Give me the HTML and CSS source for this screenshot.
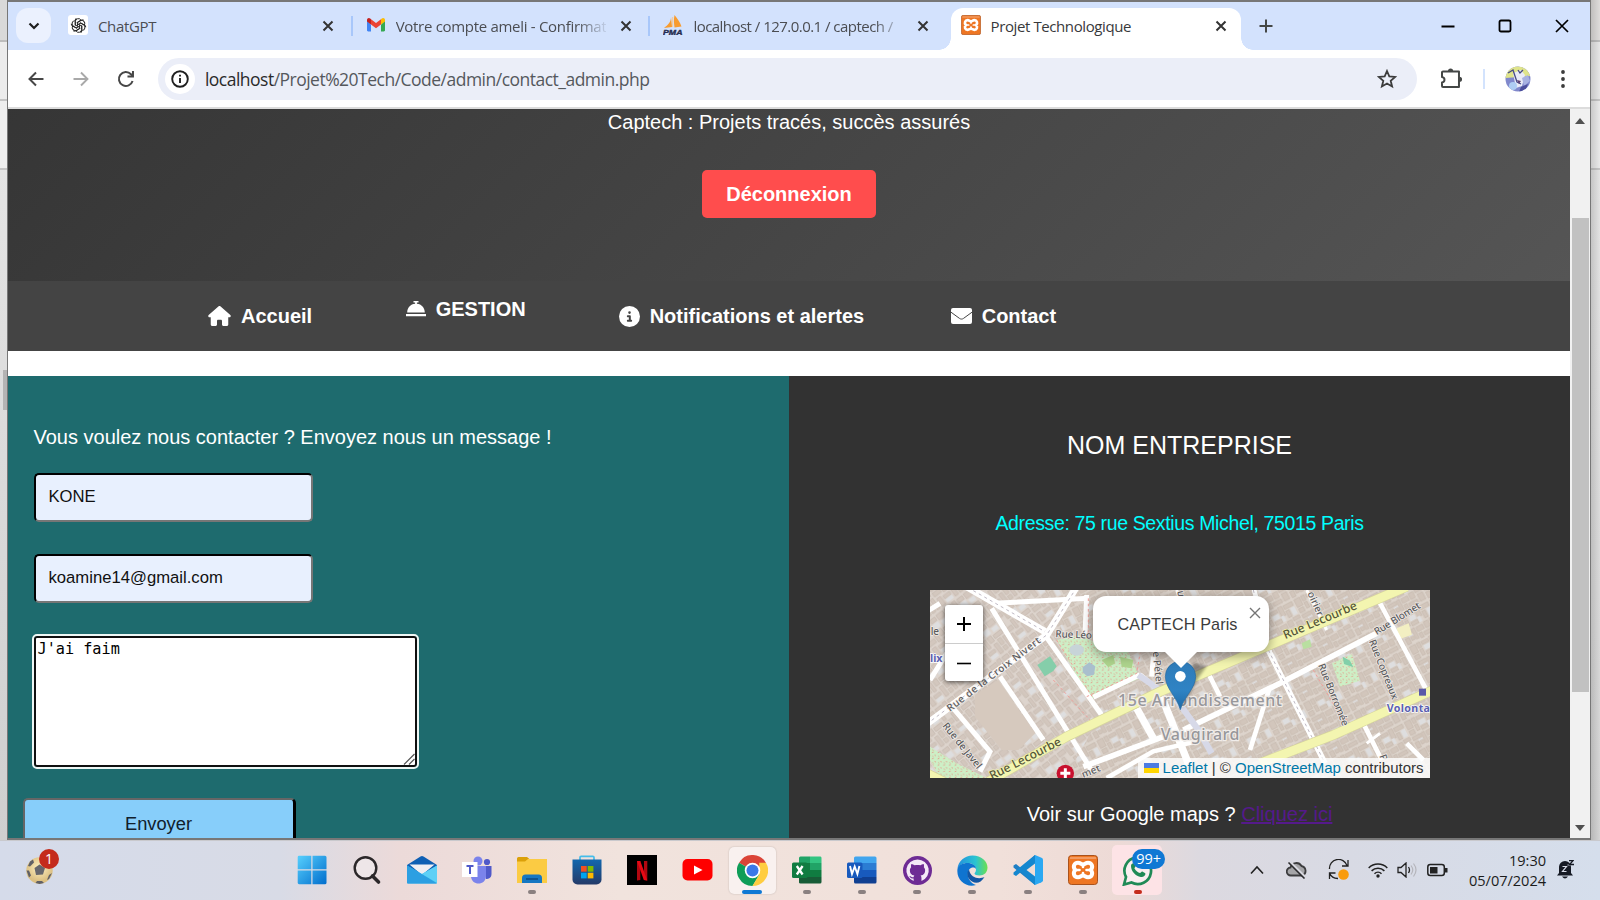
FILE: index.html
```html
<!DOCTYPE html>
<html lang="fr">
<head>
<meta charset="utf-8">
<title>Projet Technologique</title>
<link rel="stylesheet" href="styles.css">
</head>
<body>
<svg class="defs" width="0" height="0">
  <defs>
    <symbol id="x" viewBox="0 0 14 14"><path d="M2.500 2.500l9 9M11.500 2.500l-9 9" fill="none" stroke="currentColor" stroke-width="2"/></symbol>
    <symbol id="xampp" viewBox="0 0 30 30">
      <rect x=".5" y=".5" width="29" height="29" rx="3" fill="#ee7623" stroke="#a9521d"/>
      <path d="M2 3h26" stroke="#f5a878" stroke-width="1.500"/>
      <path d="M7.300 15C4.500 12 6 7.800 10 7.800c2.600 0 3.200 1.600 5 1.600s2.400-1.600 5-1.600c4 0 5.500 4.200 2.700 7.200 2.800 3 1.300 7.200-2.700 7.200-2.600 0-3.200-1.600-5-1.600s-2.400 1.600-5 1.600c-4 0-5.500-4.200-2.700-7.200z" fill="#ee7623" stroke="#fff" stroke-width="4"/>
      <path d="M8 15h3.500M18.500 15H22M15 9.500v2.500M15 18v2.500" stroke="#fff" stroke-width="2.600" stroke-linecap="round"/>
    </symbol>
  </defs>
</svg>
<div class="desktop">
  <div class="stage">
    <div class="edge edge-left"><i class="edge-thumb"></i></div>
    <div class="window">
      <div class="tabstrip">
        <button class="tab-search" aria-label="Rechercher des onglets"><svg width="14" height="14" viewBox="0 0 14 14"><path d="M2.500 4.500L7 9l4.500-4.500" fill="none" stroke="#1f1f1f" stroke-width="2.200"/></svg></button>
        <div class="tab">
          <span class="fav fav-white"><svg width="17" height="17" viewBox="0 0 16 16" fill="none" stroke="#222" stroke-width=".9">
            <path id="petal" d="M5 8.200V4.300a2.900 2.900 0 0 1 5.300-1.500M7 8.700V5l3.600-2.100a2.900 2.900 0 0 1 2.300 0"/>
            <use href="#petal" transform="rotate(60 8 8)"/>
            <use href="#petal" transform="rotate(120 8 8)"/>
            <use href="#petal" transform="rotate(180 8 8)"/>
            <use href="#petal" transform="rotate(240 8 8)"/>
            <use href="#petal" transform="rotate(300 8 8)"/>
          </svg></span>
          <span class="tab-title t1">ChatGPT</span>
          <svg class="tab-x" width="14" height="14"><use href="#x"/></svg>
        </div>
        <div class="tab sep">
          <span class="fav"><svg width="20" height="20" viewBox="0 0 20 20"><path d="M1 5.500V15.200c0 .7.500 1.200 1.200 1.200H5V9.500z" fill="#4285f4"/><path d="M15 9.500v6.900h2.800c.7 0 1.200-.5 1.200-1.200V5.500z" fill="#34a853"/><path d="M5 4.300v5.200l5 3.800 5-3.800V4.300l-5 3.800z" fill="#ea4335"/><path d="M15 4.300v5.200l4-3V5c0-1.800-1.900-2.700-3.200-1.500z" fill="#fbbc04"/><path d="M5 4.300v5.200l-4-3V5c0-1.800 1.900-2.700 3.200-1.500z" fill="#c5221f"/></svg></span>
          <span class="tab-title t2 fade">Votre compte ameli - Confirmat</span>
          <svg class="tab-x" width="14" height="14"><use href="#x"/></svg>
        </div>
        <div class="tab sep">
          <span class="fav"><svg width="20" height="20" viewBox="0 0 20 20"><path d="M8 2C8 7 5 10 1 13l8-1zM11.500 0c-1 5-.5 8 0 12.500l7-1C17 7 14 3 11.500 0z" fill="#f89c2f"/><path d="M9.700 2v10" stroke="#fcc98b"/><text x="0" y="19.700" font-size="7.800" font-weight="900" font-style="italic" font-family="Liberation Sans" textLength="19.500" lengthAdjust="spacingAndGlyphs" fill="#262d52" stroke="#262d52" stroke-width=".4">PMA</text></svg></span>
          <span class="tab-title t3 fade">localhost / 127.0.0.1 / captech /</span>
          <svg class="tab-x" width="14" height="14"><use href="#x"/></svg>
        </div>
        <div class="tab active">
          <span class="fav"><svg width="20" height="20"><use href="#xampp"/></svg></span>
          <span class="tab-title t4">Projet Technologique</span>
          <svg class="tab-x" width="14" height="14"><use href="#x"/></svg>
        </div>
        <svg class="newtab" width="14" height="14" viewBox="0 0 14 14"><path d="M7 .5v13M.5 7h13" stroke="#444746" stroke-width="2"/></svg>
        <div class="caption">
          <svg width="14" height="14" viewBox="0 0 14 14"><path d="M.5 7.500h13" stroke="#000" stroke-width="2"/></svg>
          <svg width="14" height="14" viewBox="0 0 14 14"><rect x="1.500" y="1.500" width="11" height="11" rx="1.500" fill="none" stroke="#000" stroke-width="1.800"/></svg>
          <svg width="14" height="14" viewBox="0 0 14 14"><path d="M1 1l12 12M13 1L1 13" stroke="#000" stroke-width="1.700"/></svg>
        </div>
      </div>
      <div class="toolbar">
        <svg class="tb" width="20" height="20" viewBox="0 0 20 20" fill="none" stroke="#474747" stroke-width="2"><path d="M17.500 10H4M10 3.500L3.500 10l6.500 6.500"/></svg>
        <svg class="tb" width="20" height="20" viewBox="0 0 20 20" fill="none" stroke="#a9a9a9" stroke-width="1.900"><path d="M2.500 10H16M10 3.500l6.500 6.500-6.500 6.500"/></svg>
        <svg class="tb" width="20" height="20" viewBox="0 0 20 20" fill="none" stroke="#474747" stroke-width="2"><path d="M16.600 12A7 7 0 1 1 15 5.200l1.500 1.600"/><path d="M17 2v5.500h-5.500"/></svg>
        <div class="omnibox">
          <span class="site"><svg width="20" height="20" viewBox="0 0 20 20"><circle cx="10" cy="10" r="7.800" fill="none" stroke="#1f1f1f" stroke-width="1.900"/><path d="M10 9v5M10 5.700v1.900" stroke="#1f1f1f" stroke-width="1.900"/></svg></span>
          <span class="url"><b>localhost</b>/Projet%20Tech/Code/admin/contact_admin.php</span>
          <svg class="star" width="20" height="20" viewBox="0 0 20 20"><path d="M10 2l2.300 5.400 5.900.5-4.500 3.900 1.400 5.700-5.100-3-5.100 3 1.400-5.700L1.800 7.900l5.900-.5z" fill="none" stroke="#3c3c3c" stroke-width="1.800"/></svg>
        </div>
        <svg class="puzzle" width="22" height="22" viewBox="0 0 22 22"><path d="M3 3.500h16v15.500H3a1 1 0 0 1-1-1v-3.500c3.300-.5 3.300-5 0-5.500V4.500a1 1 0 0 1 1-1z" fill="none" stroke="#444746" stroke-width="2" stroke-linejoin="round"/><path d="M8 3a2.600 2.600 0 0 1 5.200 0zM19.500 8.800a2.600 2.600 0 0 1 0 5.200z" fill="#444746"/></svg>
        <i class="tb-sep"></i>
        <svg class="avatar" width="26" height="26" viewBox="0 0 26 26"><clipPath id="av"><circle cx="13" cy="13" r="12.500"/></clipPath><g clip-path="url(#av)"><path fill="#8088cc" d="M0 0h26v26H0z"/><path d="M0 0h26v10L0 12z" fill="#dfe48a"/><path d="M8 7l8-3 4 5-3 11-6 2z" fill="#e9ebf7"/><path d="M3 7l5-3 4 12 4 2M13 4l2 3 3-3" stroke="#464a86" stroke-width="1.300" fill="none"/><circle cx="8" cy="20" r="4" fill="#aecdf3"/><path d="M17 12l6-3 2 6-6 5z" fill="#a8b2e2"/><path d="M12 14l4 1-2 3z" fill="#5e3f70"/><path d="M16 21l7-3-3 8h-6z" fill="#4c4f9c"/></g></svg>
        <svg class="dots" width="6" height="20" viewBox="0 0 6 20" fill="#3c3c3c"><circle cx="3" cy="3" r="1.900"/><circle cx="3" cy="10" r="1.900"/><circle cx="3" cy="17" r="1.900"/></svg>
      </div>
      <div class="viewport">
        <div class="page">
          <header class="hero">
            <p class="slogan">Captech : Projets tracés, succès assurés</p>
            <a class="logout">Déconnexion</a>
          </header>
          <nav class="nav">
            <a class="n1"><svg width="23" height="20" viewBox="0 0 576 512" fill="#fff"><path d="M575.800 255.500c0 18-15 32.100-32 32.100h-32l.7 160.200V472c0 22-18 40-40 40H392c-22 0-40-18-40-40V384c0-18-14-32-32-32h-64c-18 0-32 14-32 32v88c0 22-18 40-40 40h-80c-22 0-40-18-40-40V287.600H32c-18 0-32-14-32-32.100 0-9 3-17 10-24L266.400 8c7-7 15-8 22-8s15 2 21 7l255.400 224.500c8 7 12 15 11 24z"/></svg><span>Accueil</span></a>
            <a class="n2"><svg width="20" height="16" viewBox="0 0 20 16" fill="#fff"><path d="M7.500 0h5v1.600h-1.600v1.200C15.500 3.200 18.800 6.800 18.800 11.500H1.200C1.200 6.800 4.500 3.200 9.100 2.800V1.600H7.500zM0 13h20v2.200H0z"/></svg><span>GESTION</span></a>
            <a class="n3"><svg width="21" height="21" viewBox="0 0 512 512"><circle cx="256" cy="256" r="256" fill="#fff"/><path d="M216 336h24v-64h-24c-13 0-24-11-24-24s11-24 24-24h48c13 0 24 11 24 24v88h8c13 0 24 11 24 24s-11 24-24 24h-80c-13 0-24-11-24-24s11-24 24-24zM256 192a32 32 0 1 1 0-64 32 32 0 0 1 0 64z" fill="#444"/></svg><span>Notifications et alertes</span></a>
            <a class="n4"><svg width="21" height="16" viewBox="0 0 21 16"><rect width="21" height="16" rx="2" fill="#fff"/><path d="M0 4.200l8.500 6.200c1.300.9 2.700.9 4 0L21 4.200" fill="none" stroke="#444" stroke-width="1"/></svg><span>Contact</span></a>
          </nav>
          <main class="split">
            <section class="form">
              <p class="lead">Vous voulez nous contacter ? Envoyez nous un message !</p>
              <input class="field" type="text" value="KONE">
              <input class="field second" type="text" value="koamine14@gmail.com">
              <div class="area">J'ai faim<svg width="12" height="12" viewBox="0 0 12 12"><path d="M1 11.500L11.500 1M6 11.500L11.500 6" stroke="#555" stroke-width="1.200"/></svg></div>
              <div class="send">Envoyer</div>
            </section>
            <section class="info">
              <h2>NOM ENTREPRISE</h2>
              <p class="addr">Adresse: 75 rue Sextius Michel, 75015 Paris</p>
              <div class="map">
                <svg class="tiles" width="500" height="188" viewBox="30 30 1500 564">
                  <defs>
                    <pattern id="bl" width="120" height="96" patternUnits="userSpaceOnUse" patternTransform="rotate(-28)">
                      <path fill="#ddd4cc" d="M0 0h120v96H0z"/>
                      <g fill="#d2c6bc" stroke="#c2b5aa" stroke-width="1.800"><path d="M2 3h18v26H2zM24 3h12v16H24zM40 5h22v10H40zM66 2h14v30H66zM84 4h30v12H84zM25 24h10v20H25zM84 22h12v22H84zM2 34h16v14H2zM40 36h22v12H40zM2 54h26v12H2zM32 54h10v34H32zM47 56h22v14H47zM74 52h14v20H74zM93 50h22v10H93zM2 72h12v20H2zM18 74h10v12H18zM47 76h10v16H47zM62 78h28v12H62zM96 66h18v24H96z"/></g>
                      <g fill="#dededf"><path d="M41 18h20v15H41zM100 20h14v24h-14zM15 68h14v5H15zM64 30h10v18H64z"/></g>
                    </pattern>
                    <pattern id="bl2" width="104" height="110" patternUnits="userSpaceOnUse" patternTransform="rotate(-38)">
                      <path fill="#ddd4cd" d="M0 0h104v110H0z"/>
                      <g fill="#d3c7be" stroke="#c3b6ac" stroke-width="1.800"><path d="M3 4h24v14H3zM32 2h12v32H32zM50 4h20v12H50zM76 3h24v18H76zM4 24h10v24H4zM50 42h14v20H50zM70 46h30v12H70zM3 54h26v14H3zM34 42h10v30H34zM4 76h14v28H4zM24 80h24v10H24zM54 70h12v34H54zM72 64h12v20H72zM90 66h10v38H90zM72 90h12v14H72z"/></g>
                      <g fill="#dededf"><path d="M50 20h20v18H50zM78 26h20v14H78zM24 93h24v12H24z"/></g>
                    </pattern>
                    <pattern id="dot" width="17" height="19" patternUnits="userSpaceOnUse"><path fill="#cdefc6" d="M0 0h17v19H0z"/><path d="M2 5l5-2M10 12l4 2M4 15l2 3" stroke="#e8867c" stroke-width="2.400"/></pattern>
                    <linearGradient id="pin" x2="0" y2="1"><stop stop-color="#2e7bb8"/><stop offset=".6" stop-color="#2f83c4"/><stop offset="1" stop-color="#1f6aa6"/></linearGradient>
                    <filter id="soft"><feGaussianBlur stdDeviation="2"/></filter>
                    <filter id="blur"><feGaussianBlur stdDeviation="5"/></filter>
                  </defs>
                  <g filter="url(#soft)">
                    <path fill="url(#bl)" d="M20 20h1520v584H20z"/>
                    <path fill="url(#bl2)" d="M20 20h350L540 410 430 604H20z"/>
                    <path d="M165 345l70-45 110 160-50 50-50 0-80-100z" fill="#d6c9be"/>
                    <path d="M410 180l70-15 60 30 80 10 40 90-150 65z" fill="url(#dot)"/>
                    <ellipse cx="470" cy="210" rx="22" ry="17" fill="#c7d4d8"/><path d="M488 262l20-15 18 12-4 25-20 5-14-12z" fill="#a9bfcd"/>
                    <path d="M545 240l35-15 5 25-20 12zM600 230l40 10-5 25-30-5z" fill="#aed48d"/>
                    <path d="M352 255l38-26 20 30-10 14-26 16z" fill="#85ceaa"/>
                    <path d="M1236 250l60-28 24 80-60 18z" fill="url(#dot)"/><path d="M1268 230l22 12 10 20-28-10z" fill="#82cfa9"/>
                    <path d="M1145 190l25-12 5 22-25 8z" fill="#b9dfa0"/>
                    <path d="M30 500l80 50 90 44H60L30 540z" fill="url(#dot)"/>
                    <path d="M1430 145l36-15 10 34-38 14z" fill="#f3efc2"/>
                    <g fill="none" stroke="#fff" stroke-width="15">
                      <path d="M20 432L380 165 470 20" stroke-width="21"/><path d="M140 20L375 155" stroke-width="22"/>
                      <path d="M215 85L520 580M20 95l40-25M225 70l280-15M375 165l170 240M500 45l-5 120M240 290l130 190M100 385l110 130-30 60M520 352l140-68M660 284l60 50M700 230l-5 60M30 300l50-80"/>
                      <path d="M650 385l50 90M725 350l80 200" stroke-width="22"/>
                      <path d="M490 560l240-90M790 450l290-140 290-150M1040 200l175 350" stroke-width="17"/>
                      <path d="M1375 60l155 290M1050 320l-60 190M860 270l40 80M1000 20l50 200M1330 430l55 110M1460 490l50 50M560 594l140-80 130-30" stroke-width="14"/>
                      <path d="M770 30l20 60M1160 30l60 120M1380 460l-40 30" stroke-width="9"/>
                    </g>
                    <path d="M655 285l65 45M770 360l65 90 40 70" fill="none" stroke="#d7d9e8" stroke-width="19"/>
                    <g fill="none" stroke="#bfb9c4" stroke-width="3" stroke-dasharray="9 10"><path d="M35 421L380 165 465 30M160 32L375 155M1045 210l165 330M1000 30l45 180"/></g>
                    <g fill="none" stroke="#f0a09b" stroke-width="3" stroke-dasharray="8 8"><path d="M410 180l110 175M500 350l150-70 10-60M1180 270l70 120 50 50M505 55v110M400 300l110 120"/></g>
                    <g fill="none" stroke="#d7d69b" stroke-width="30"><path d="M205 605L440 470 720 335 1050 195 1460 20M1020 550L1240 465 1540 330M20 580l60 30"/></g>
                    <g fill="none" stroke="#f3f5b0" stroke-width="26"><path d="M205 605L440 470 720 335 1050 195 1460 20M1020 550L1240 465 1540 330M20 580l60 30"/></g>
                    <path d="M1497 326h21v21h-21z" fill="#5a5aa8"/>
                  </g>
                  <circle cx="436" cy="580" r="26" fill="#c8102e"/><path d="M436 565v30M421 580h30" stroke="#fff" stroke-width="9"/>
                  <g class="lab">
                    <text transform="translate(90 396) rotate(-37.500)" textLength="345">Rue de la Croix Nivert</text>
                    <text transform="translate(406 172) rotate(2)" textLength="110">Rue Léo</text>
                    <text transform="translate(698 215) rotate(84)" textLength="100">e Pétel</text>
                    <text transform="translate(66 438) rotate(51)" textLength="168">Rue de Javel</text>
                    <text transform="translate(1346 184) rotate(68)" textLength="190">Rue Copreaux</text>
                    <text transform="translate(1194 256) rotate(68)" textLength="198">Rue Borromée</text>
                    <text transform="translate(1370 166) rotate(-32)" textLength="158">Rue Blomet</text>
                    <text transform="translate(1162 40) rotate(66)">oirier</text>
                    <text transform="translate(772 34) rotate(80)">u</text>
                    <text transform="translate(490 594) rotate(-22)">met</text>
                    <text x="32" y="165">le</text>
                    <text transform="translate(1378 528) rotate(68)">P</text>
                  </g>
                  <g class="lab big">
                    <text transform="translate(1096 178) rotate(-23)" textLength="236">Rue Lecourbe</text>
                    <text transform="translate(216 600) rotate(-27)" textLength="236">Rue Lecourbe</text>
                  </g>
                  <text class="metro" x="30" y="246">lix</text>
                  <text class="metro" x="1400" y="396" textLength="130">Volonta</text>
                  <text class="place" x="594" y="377" textLength="492">15e Arrondissement</text>
                  <text class="place" x="722" y="481" textLength="236">Vaugirard</text>
                  <path d="M785 388l50-95 25-35-40-10z" fill="#000" opacity=".35" filter="url(#blur)"/>
                  <path d="M781 389C770 350 736 325 736 289a45.500 45.500 0 0 1 91 0c0 36-35 61-46 100z" fill="url(#pin)" stroke="#2569a0" stroke-width="2"/><circle cx="781" cy="289" r="16" fill="#fff"/>
                </svg>
                <div class="zoom"><span><svg width="16" height="16" viewBox="0 0 16 16"><path d="M8 1v14M1 8h14" stroke="#000" stroke-width="2"/></svg></span><span><svg width="16" height="16" viewBox="0 0 16 16"><path d="M1 8.500h14" stroke="#000" stroke-width="1.600"/></svg></span></div>
                <div class="popup">CAPTECH Paris<svg width="12" height="12" viewBox="0 0 12 12"><path d="M1 1l10 10M11 1L1 11" stroke="#757575" stroke-width="1.400"/></svg></div>
                <div class="attr"><i class="flag"></i><a>Leaflet</a> | © <a>OpenStreetMap</a> contributors</div>
              </div>
              <p class="gm">Voir sur Google maps ? <a>Cliquez ici</a></p>
            </section>
          </main>
        </div>
        <div class="scroll"><svg width="10" height="6" viewBox="0 0 10 6"><path d="M0 6l5-6 5 6z" fill="#505050"/></svg><i class="thumb"></i><svg width="10" height="6" viewBox="0 0 10 6"><path d="M0 0l5 6 5-6z" fill="#505050"/></svg></div>
      </div>
    </div>
    <div class="edge edge-right"></div>
  </div>
  <footer class="taskbar">
    <div class="widget"><svg width="27" height="27" viewBox="0 0 27 27"><defs><radialGradient id="ball" cx=".5" cy=".4"><stop stop-color="#fff1c2"/><stop offset="1" stop-color="#dcc083"/></radialGradient></defs><circle cx="13.500" cy="13.500" r="13.200" fill="url(#ball)"/><path d="M8.500 11l5-3.500 5.500 3.500-2 6.500-7 .5z" fill="#66666c"/><path d="M4 4.500l3-2 1 3-4 4-2-.5zM.5 13.500l2.500 0 2 5-2 2zM11 24l5 0 2 2-4.500 1-4-1zM23 18l3-2-3 6-2 1z" fill="#606066"/></svg><b>1</b></div>
    <div class="apps">
      <span class="app"><svg width="30" height="30" viewBox="0 0 30 30"><defs><linearGradient id="w2" gradientUnits="userSpaceOnUse" x1="2" y1="2" x2="28" y2="28"><stop stop-color="#53cbfb"/><stop offset="1" stop-color="#0572cf"/></linearGradient></defs><path d="M.7 2A1.500 1.500 0 0 1 2 .8h12.300v13.500H.7zM15.500.8H28a1.500 1.500 0 0 1 1.500 1.500v12h-14zM.7 15.500h13.600v13.700H2A1.500 1.500 0 0 1 .7 28zM15.500 15.500h14V28a1.500 1.500 0 0 1-1.500 1.200H15.500z" fill="url(#w2)"/></svg></span>
      <span class="app"><svg width="30" height="30" viewBox="0 0 30 30"><circle cx="13.500" cy="13" r="10.800" fill="#eee6e8" stroke="#2b2729" stroke-width="2.400"/><path d="M20.500 21l6 6" stroke="#2b2729" stroke-width="3.600" stroke-linecap="round"/></svg></span>
      <span class="app"><svg width="32" height="30" viewBox="0 0 32 30"><path d="M1 10L14.500 1.500q1.500-1 3 0L31 10v7H1z" fill="#0f5fb4"/><path d="M3.500 9.500h25L16 20z" fill="#f1eef2"/><path d="M1 10.500L16 19 31 10.500V27.500q0 1-1 1H2q-1 0-1-1z" fill="#2cb4ee"/><path d="M12 16.700L31 28.500H2q-1 0-1-1V10.500z" fill="#2c9fe2"/><path d="M16 19L31 10.500V28z" fill="#5ed0f6"/><path d="M5 10h22l-11 8.500z" fill="#f1eef2"/></svg></span>
      <span class="app"><svg width="30" height="30" viewBox="0 0 30 30"><circle cx="16" cy="6" r="4.500" fill="#7b83eb"/><circle cx="25" cy="7" r="3.100" fill="#5059c9"/><path d="M22 11h7.500v8c0 4-3 5-5.500 5z" fill="#5059c9"/><path d="M9 11h15v10c0 10-15 10-15 0z" fill="#7b83eb"/><path d="M0 7h15.500V22H0z" fill="#fff"/><path d="M4.500 11h7M8 11v8" stroke="#5059c9" stroke-width="2"/></svg></span>
      <span class="app run"><svg width="30" height="30" viewBox="0 0 30 30"><path d="M0 3.500Q0 2 1.500 2H10l3 2.500L10 10H0z" fill="#dba009"/><path d="M11 4h19v24H0V6.500h8z" fill="#fbcb43"/><path d="M5 28v-5a3.500 3.500 0 0 1 3.500-3.500h13A3.500 3.500 0 0 1 25 23v5z" fill="#1677c2"/><path d="M9 24h12" stroke="#0c4c86" stroke-width="1.600"/></svg></span>
      <span class="app"><svg width="30" height="30" viewBox="0 0 30 30"><defs><linearGradient id="st" x2="0" y2="1"><stop stop-color="#1267ae"/><stop offset="1" stop-color="#243a68"/></linearGradient></defs><path d="M8 6V2.500q0-1.200 1.200-1.200h11.600q1.200 0 1.200 1.200V6" fill="none" stroke="#46bdea" stroke-width="1.700"/><path d="M.5 4.500h29v20a5 5 0 0 1-5 5h-19a5 5 0 0 1-5-5z" fill="url(#st)"/><path d="M9 11h5.700v5.700H9z" fill="#f25022"/><path d="M15.700 11h5.700v5.700h-5.700z" fill="#7fba00"/><path d="M9 17.700h5.700v5.700H9z" fill="#00a4ef"/><path d="M15.700 17.700h5.700v5.700h-5.700z" fill="#ffb900"/></svg></span>
      <span class="app"><svg width="30" height="30" viewBox="0 0 30 30"><path d="M0 0h30v30H0z"/><path d="M10 6h3.300v19l-3.300.4zM17 6h3.300v19.400L17 25z" fill="#b20710"/><path d="M10 6h3.300l7 19.400-3.500-.4z" fill="#e50914"/></svg></span>
      <span class="app"><svg width="31" height="30" viewBox="0 0 31 30"><rect x=".5" y="4" width="30" height="21.500" rx="5" fill="#f00"/><path d="M12 10.500l8.500 4.500-8.500 4.500z" fill="#fff"/></svg></span>
      <span class="app tile on"><svg width="31" height="31" viewBox="0 0 48 48"><path d="M24 24L3.200 12A24 24 0 0 1 44.800 12z" fill="#db4437"/><path d="M24 24L3.200 12A24 24 0 0 0 24 48l11-18z" fill="#0f9d58"/><path d="M24 48l10.400-18V12h10.400A24 24 0 0 1 24 48z" fill="#ffcd40"/><circle cx="24" cy="24" r="12" fill="#fff"/><circle cx="24" cy="24" r="9.300" fill="#3b78e7"/></svg></span>
      <span class="app run"><svg width="30" height="30" viewBox="0 0 30 30"><path d="M7 3q0-1.500 1.500-1.500H18V15H7z" fill="#21a366"/><path d="M18 1.500h10.500Q29.500 1.500 29.500 3v5H18z" fill="#33c481"/><path d="M18 8h11.500v7H18z" fill="#21a366"/><path d="M7 8h11v20H8.500Q7 28 7 26.500z" fill="#107c41"/><path d="M18 15h11.500v7H18z" fill="#107c41"/><path d="M7 22h22.500v5q0 1.500-1.500 1.500H8.500Q7 28.500 7 27z" fill="#185c37"/><rect y="7.500" width="15.500" height="15.500" rx="1.500" fill="#107c41"/><path d="M4.800 11l5.800 8.500M10.600 11l-5.800 8.500" stroke="#fff" stroke-width="2.300"/></svg></span>
      <span class="app run"><svg width="30" height="30" viewBox="0 0 30 30"><path d="M7 3q0-1.500 1.500-1.500H28q1.500 0 1.500 1.500v5H7z" fill="#41a5ee"/><path d="M7 8h22.500v7H7z" fill="#2b7cd3"/><path d="M7 15h22.500v7H7z" fill="#185abd"/><path d="M7 22h22.500v5q0 1.500-1.500 1.500H8.500Q7 28.500 7 27z" fill="#103f91"/><rect y="7.500" width="15.500" height="15.500" rx="1.500" fill="#185abd"/><path d="M3 11l2 8 2.700-7.500L10.400 19l2-8" fill="none" stroke="#fff" stroke-width="1.900"/></svg></span>
      <span class="app run"><svg width="29" height="29" viewBox="0 0 30 30"><circle cx="15" cy="15" r="15" fill="#6e2b94"/><path d="M15 3.500a11.500 11.500 0 0 0-4 22.300v-2.600c-3 .6-3.500-1.500-4.500-2.600 1.800-.3 2.500 2 4.500 1.300.1-.8.400-1.300.8-1.600-3.500-.6-4.700-2.600-4.700-5.300 0-1.400.5-2.500 1.300-3.300-.3-1.200-.2-2.400.2-3.500 1.400 0 2.600.8 3.500 1.400 1.800-.5 4-.5 5.800 0 .9-.6 2.100-1.400 3.500-1.400.4 1.100.5 2.300.2 3.500.8.800 1.300 1.900 1.300 3.300 0 2.700-1.200 4.700-4.700 5.300.6.500.9 1.300.9 2.500v3a11.500 11.500 0 0 0-4.100-22.300z" fill="#f4e9f7"/></svg></span>
      <span class="app run"><svg width="31" height="31" viewBox="0 0 31 31"><defs><linearGradient id="e1" x2="1"><stop stop-color="#2390dd"/><stop offset=".6" stop-color="#2bc3d2"/><stop offset="1" stop-color="#6be04f"/></linearGradient></defs><path d="M.5 14C1 6 8 .5 15.500.5c9 0 15 6 15 12 0 5-3.500 8-8 8-3 0-5-1-5-2 0-.8 1.500-1.300 1.500-4C19 11 15.500 8 11 8 5 8 1.500 11.500.5 14z" fill="url(#e1)"/><path d="M.5 14c1-4 5.500-6 10-6 4.500 0 8.500 2.500 8.500 6-1-1.500-2.500-1.800-4-1.500-7 2-5 15 4 17.500C9 33-1 25 .5 14z" fill="#0f74d0"/><path d="M12 14.500c-3 3-2 9 3 12 4 2.500 9 1.500 12.500-4.500-5 2.500-14 1.500-15.500-7.500z" fill="#1256a4"/></svg></span>
      <span class="app run"><svg width="30" height="30" viewBox="0 0 30 30"><path d="M22 0L8 13 3 9 .5 10.500v2L17 26l5 4 1-8V8z" fill="#1f7ec4"/><path d="M22 30L8 17l-5 4-2.500-1.500v-2L17 4l5-4 1 8v14z" fill="#1587cf"/><path d="M22 0l6.500 2.800q1.500.7 1.500 2v20.400q0 1.300-1.500 2L22 30z" fill="#2ba8f2"/><path d="M22 8.500v13L13.500 15z" fill="#f1ddd6"/></svg></span>
      <span class="app run"><svg width="30" height="30"><use href="#xampp"/></svg></span>
      <span class="app tile pink alert"><svg width="31" height="31" viewBox="0 0 31 31"><path d="M2 29.500l2-7.500A13.300 13.300 0 1 1 9.500 27.500z" fill="#fbeef0" stroke="#208a56" stroke-width="2.700"/><path d="M9 11c0-2 1.500-3 2.500-2.800.8 0 1.700 2.300 2 3.300 0 .8-1.300 1.500-1 2 1.500 2.500 3.500 4 5.500 4.500.8 0 1.500-1.800 2.300-1.500l3 1.700c.5 3-2.800 4-4.500 3.700C14 21.500 9 16.500 9 11z" fill="#208a56"/></svg><b class="count">99+</b></span>
    </div>
    <div class="tray">
      <svg width="14" height="10" viewBox="0 0 14 10"><path d="M1 8.500L7 2l6 6.500" fill="none" stroke="#222" stroke-width="1.600"/></svg>
      <svg class="cloud" width="22" height="18" viewBox="0 0 22 18"><path d="M5 14.500a4 4 0 0 1-.5-8A6 6 0 0 1 15.500 5a5 5 0 0 1 1 9.500z" fill="#a5a5a8" stroke="#3c3c3e" stroke-width="1.800"/><path d="M4 1l16 16" stroke="#d8d8e0" stroke-width="2.500"/><path d="M2.500 1.500l16 16" stroke="#2a2a2c" stroke-width="1.600"/></svg>
      <svg class="sync" width="21" height="21" viewBox="0 0 21 21"><path d="M1.500 10A9 9 0 0 1 19 6.500M20 1v6h-6M1.500 20v-6h6M1.500 14A9 9 0 0 0 10 19.500" fill="none" stroke="#222" stroke-width="1.300"/><circle cx="15.500" cy="15.500" r="5.300" fill="#f99b0c"/></svg>
      <svg class="wifi" width="20" height="16" viewBox="0 0 20 16"><g fill="none" stroke="#222" stroke-width="1.500"><path d="M.7 6a13 13 0 0 1 18.600 0M3.600 8.900a9 9 0 0 1 12.800 0M6.500 11.700a5 5 0 0 1 7 0"/></g><circle cx="10" cy="14" r="1.700" fill="#222"/></svg>
      <svg class="vol" width="20" height="16" viewBox="0 0 20 16"><path d="M1 5.500h3L9 1v14l-5-4.500H1zM11.500 5q2 3 0 6" fill="none" stroke="#222" stroke-width="1.300"/><path d="M14 3.500q3.500 4.500 0 9M16.500 1.500q5 6.500 0 13" fill="none" stroke="#b5b5bb" stroke-width="1.200"/></svg>
      <svg class="bat" width="21" height="14" viewBox="0 0 21 14"><rect x=".8" y="1.500" width="16.500" height="11" rx="2.500" fill="none" stroke="#222" stroke-width="1.500"/><path d="M3 4h7.500v6.500H3zM18 5h2.500v4.500H18z" fill="#222"/></svg>
      <div class="clock"><span>19:30</span><span>05/07/2024</span></div>
      <svg class="bell" width="17" height="19" viewBox="0 0 17 19"><path d="M2 13V7a6 6 0 0 1 12 0v6l2 2.500H0zM5 16.500h6q-3 4-6 0z" fill="#161a24"/><path d="M5.500 6.500h4l-4 5h4M10.500 5h3" fill="none" stroke="#d9dde9" stroke-width="1.200"/><path d="M12 .7h4l-3.500 3.800H17" fill="none" stroke="#161a24" stroke-width="1.300"/></svg>
    </div>
  </footer>
</div>
</body>
</html>
```

FILE: styles.css
```css
* { box-sizing: border-box; }
body { margin: 0; font-family: "Liberation Sans", Arial, sans-serif; }
.defs { position: absolute; }
.desktop { width: 1600px; height: 900px; overflow: hidden; display: flex; flex-direction: column; }
.stage { display: flex; height: 840px; }
.edge { flex: none; }
.edge-left { width: 7px; padding: 370px 0 0 3px; background: linear-gradient(#d9d9d9 0 40px, #bdbdbd 40px 42px, #ececec 42px 99px, #c4c4c4 99px 101px, #eee 101px 168px, #c4c4c4 168px 170px, #e4e4e4 170px, #cfcfcf); }
.edge-thumb { display: block; width: 4px; height: 40px; background: #b4b4b4; }
.edge-right { width: 9px; background: linear-gradient(90deg, #0002, #0000), linear-gradient(#dedcdb 0 40px, #bdbdbd 40px 42px, #e6e6e6 42px 99px, #c4c4c4 99px 101px, #e9e9e9 101px 168px, #c4c4c4 168px 170px, #e4e4e4 170px, #d4d4d4); }
.window { width: 1584px; border: 1px solid #777; border-top-width: 2px; border-bottom-width: 2px; background: #fff; }

.tabstrip { display: flex; align-items: flex-start; height: 48px; background: #d3e2fd; font-family: "Open Sans", "Noto Sans", sans-serif; position: relative; }
.tab-search { width: 35px; height: 35px; margin: 6px 7px 0 8px; border: 0; border-radius: 12px; padding: 0; background: #ebf1fe; display: grid; place-items: center; }
.tab { width: 297.700px; height: 42px; margin-top: 6px; padding: 7px 0 0 10px; display: flex; position: relative; }
.tab.sep::before { content: ""; position: absolute; left: -5px; top: 8px; width: 2px; height: 20px; background: #a8c7fa; }
.fav { width: 20px; height: 20px; margin-right: 10px; display: grid; place-items: center; }
.fav-white { background: #fff; border-radius: 3px; }
.tab-title { width: 210px; height: 24px; line-height: 23px; font-size: 15px; color: #4b4d52; white-space: nowrap; }
.t1 { letter-spacing: -.35px; }
.t2 { letter-spacing: -.3px; }
.t3 { letter-spacing: -.53px; }
.t4 { letter-spacing: -.4px; }
.fade { -webkit-mask-image: linear-gradient(90deg, #000 180px, #0000 214px); mask-image: linear-gradient(90deg, #000 180px, #0000 214px); }
.tab-x { margin: 4px 0 0 13px; color: #333; }
.tab.active { width: 290px; margin-left: -.5px; background: #fff; border-radius: 12px 12px 0 0; }
.tab.active::before, .tab.active::after { content: ""; position: absolute; bottom: 0; width: 12px; height: 12px; }
.tab.active::before { left: -12px; background: radial-gradient(circle at 0 0, #0000 11.500px, #fff 12px); }
.tab.active::after { right: -12px; background: radial-gradient(circle at 100% 0, #0000 11.500px, #fff 12px); }
.active .tab-title { color: #38393b; }
.newtab { margin: 17px 0 0 18px; }
.caption { margin: 17px 21px 0 auto; display: flex; gap: 43px; }

.toolbar { display: flex; align-items: center; height: 59px; padding: 1px 24px 0 18px; background: #fff; border-bottom: 2px solid #dcdcdc; }
.tb { margin-right: 25px; }
.omnibox { width: 1261px; height: 42px; margin-left: -3px; padding: 0 20px 0 7px; border-radius: 21px; background: #ebeef8; display: flex; align-items: center; }
.site { width: 30px; height: 30px; border-radius: 50%; background: #fff; display: grid; place-items: center; margin-right: 10px; }
.url { font: 17.500px "Open Sans", "Noto Sans", sans-serif; letter-spacing: -.51px; color: #55585d; flex: 1; }
.url b { font-weight: 400; color: #2a2a2a; }
.puzzle { margin-left: 23px; }
.tb-sep { width: 2px; height: 20px; background: #d3e3fd; margin: 0 20px 0 21px; }
.dots { margin: 0 0 0 29px; }

.viewport { display: flex; height: 729px; }
.page { width: 1562px; overflow: hidden; background: #fff; color: #fff; }
.hero { height: 172px; background: linear-gradient(135deg, #333, #555) left bottom / 1562px 313px; font-size: 20px; text-align: center; }
.slogan { margin: 0 0 37px; height: 24px; line-height: 26px; }
.logout { display: inline-block; height: 48px; padding: 0 24.500px; border-radius: 5px; background: #ff4d4d; font-weight: 700; line-height: 48px; }
.nav { display: flex; height: 70px; padding-left: 200px; background: #444; font-size: 20px; font-weight: 700; line-height: 24px; }
.nav a { display: flex; align-items: center; gap: 10px; height: 24px; margin-top: 23px; }
.nav .n2 { margin: 16px 0 0 93.500px; }
.nav .n3 { margin-left: 93.500px; gap: 9.500px; }
.nav .n4 { margin-left: 87px; gap: 9.500px; }
.split { margin-top: 25px; display: grid; grid-template-columns: 781px 781px; height: 462px; }
.form { background: #1e6b6e; padding: 49px 0 0 25.500px; overflow: hidden; }
.lead { margin: 0 0 24px; font-size: 20px; line-height: 24px; }
.field { display: block; width: 279px; height: 48.500px; padding: 0 13px; border: 2px inset #767676; border-color: #222 #767676 #767676 #222; border-radius: 5px; background: #e8f0fe; color: #111; font: 16.670px "Liberation Sans", Arial, sans-serif; }
.second { margin-top: 32.500px; }
.area { position: relative; width: 383px; height: 131px; margin-top: 33px; padding: 2px; border: 2px solid #101010; border-radius: 3px; outline: 2px solid #eef7f5; background: #fff; color: #000; font: 15.200px/18px "DejaVu Sans Mono", monospace; }
.area svg { position: absolute; right: 0; bottom: 0; }
.send { width: 273px; height: 50px; margin: 31px 0 0 -11px; border: 2px outset #555; border-color: #666 #000 #000 #666; border-right-width: 3px; border-radius: 5px 5px 0 0; background: #87cefa; color: #10202c; font-size: 18.300px; line-height: 47px; text-align: center; }
.info { background: #323232; text-align: center; font-size: 20px; overflow: hidden; }
.info h2 { margin: 54px 0 0; font-size: 25px; font-weight: 400; line-height: 30px; }
.addr { margin: 51px 0 55px; line-height: 24px; color: #00ffff; font-size: 19.500px; letter-spacing: -.36px; }
.map { position: relative; width: 500px; height: 188px; margin: 0 auto; overflow: hidden; text-align: left; }
.tiles { display: block; }
.lab text { font: 500 30px "Noto Sans", sans-serif; fill: #5b5b5d; paint-order: stroke; stroke: #f3eeea; stroke-width: 4px; }
.lab.big text { font-size: 36px; fill: #55553a; stroke: #f3f5b0; }
.metro { font: 700 32px "Noto Sans", sans-serif; fill: #5b60b0; paint-order: stroke; stroke: #fff; stroke-width: 4px; }
.place { font: 500 48px "Noto Sans", sans-serif; fill: #97979b; paint-order: stroke; stroke: #f1edea; stroke-width: 7px; }
.zoom { position: absolute; left: 15px; top: 15px; width: 38px; height: 76px; border-radius: 3px; background: #fff; box-shadow: 0 1px 5px #000a; display: grid; grid-template-rows: 38px 38px; }
.zoom span { display: grid; place-items: center; }
.zoom span + span { border-top: 1px solid #ccc; }
.popup { position: absolute; left: 163px; top: 6px; width: 176px; height: 56px; padding-left: 25px; border-radius: 13px; background: #fff; box-shadow: 0 3px 12px #0006; color: #3c3c3c; font-size: 16.200px; line-height: 57px; letter-spacing: .1px; }
.popup::after { content: ""; position: absolute; left: 71px; top: 55px; border: 17px solid #0000; border-top-color: #fff; border-bottom: 0; }
.popup svg { position: absolute; right: 8px; top: 11px; }
.attr { position: absolute; right: 0; bottom: 0; height: 20px; padding: 0 6px; background: #fffc; color: #333; font-size: 15px; line-height: 19px; white-space: nowrap; }
.attr a { color: #0078a8; }
.flag { display: inline-block; width: 15px; height: 10px; margin-right: 4px; background: linear-gradient(#4c7be1 50%, #ffd500 50%); }
.gm { margin: 24px 0 0; line-height: 24px; }
.gm a { color: #551a8b; text-decoration: underline; }
.scroll { width: 20px; background: #f1f1f1; display: flex; flex-direction: column; align-items: center; padding: 9px 0 7px; }
.thumb { width: 17px; height: 474px; margin: 94px 0 auto; background: #c1c1c1; }

.taskbar { position: relative; display: flex; height: 60px; border-top: 1px solid #c9c9cd; background: linear-gradient(90deg, #d5dbea 0, #d8dbe6 280px, #ecdad9 400px, #f1e3dd 620px, #f1e0da 1000px, #eddad6 1120px, #dcd9e0 1200px, #d8dae4 1350px, #d5deec 1600px); }
.widget { position: relative; width: 284px; padding: 16px 0 0 26px; }
.widget b { position: absolute; left: 39px; top: 8px; width: 20px; height: 20px; border-radius: 50%; background: #c42b1c; color: #fff; font: 14px/20px "Open Sans", sans-serif; text-align: center; }
.apps { display: flex; }
.app { position: relative; width: 55.080px; padding-bottom: 1px; display: grid; place-items: center; }
.app svg { position: relative; }
.run::after, .on::after, .alert::after { content: ""; position: absolute; bottom: 6px; width: 8px; height: 4px; border-radius: 2px; background: #8a8080; }
.on::after { width: 20px; background: #0f78d4; }
.alert::after { background: #c42b1c; }
.tile::before { content: ""; position: absolute; left: 4px; top: 6px; width: 47px; height: 47px; border-radius: 5px; background: #f9f1ef; box-shadow: 0 0 2px #0003; }
.pink::before { width: 50px; height: 50px; left: 2px; top: 4px; background: #fde3e6; box-shadow: none; }
.count { position: absolute; left: 22px; top: 8px; width: 33px; height: 20px; border-radius: 10px; background: #0f78d4; color: #fff; font: 14.500px/20px "Open Sans", sans-serif; text-align: center; }
.tray { display: flex; align-items: center; margin-left: auto; padding: 0 26px 2px 0; }
.cloud { margin-left: 22px; }
.sync { margin-left: 20px; }
.wifi { margin-left: 19px; }
.vol { margin-left: 9px; }
.bat { margin-left: 10px; }
.clock { width: 80px; margin: 0 11px 0 18px; font: 14.600px/20px "Open Sans", "Noto Sans", sans-serif; color: #1c1c1c; text-align: right; display: flex; flex-direction: column; align-items: flex-end; letter-spacing: -.05px; }
```
